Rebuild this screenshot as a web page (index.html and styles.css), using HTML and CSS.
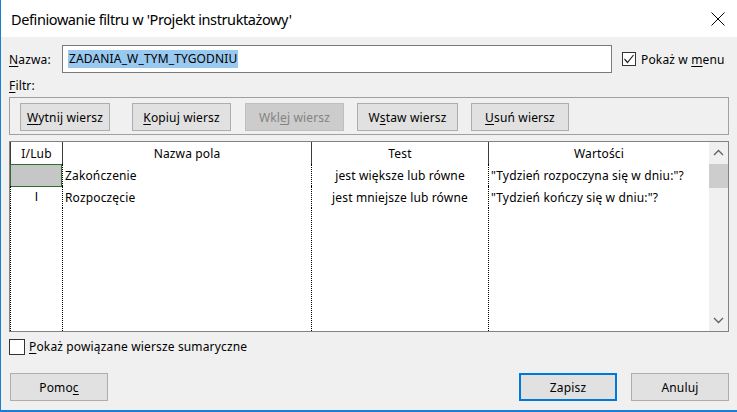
FILE: index.html
```html
<!DOCTYPE html>
<html lang="pl">
<head>
<meta charset="utf-8">
<title>Definiowanie filtru</title>
<link rel="stylesheet" href="styles.css">
</head>
<body>
<div class="window">
  <div class="titlebar">
    <span class="title">Definiowanie filtru w 'Projekt instruktażowy'</span>
    <svg class="close" width="14" height="14" viewBox="0 0 14 14"><path d="M0.5 0.5 L13.5 13.5 M13.5 0.5 L0.5 13.5" stroke="#000" stroke-width="1" fill="none"/></svg>
  </div>
  <div class="main">
    <div class="name-row">
      <span class="lbl"><u>N</u>azwa:</span>
      <div class="input"><span class="sel">ZADANIA_W_TYM_TYGODNIU</span></div>
      <label class="chk">
        <span class="box"><svg width="12" height="12" viewBox="0 0 12 12"><path d="M1.5 6 L4.5 9.5 L10.5 2" stroke="#222" stroke-width="1.2" fill="none"/></svg></span>
        <span>Pokaż w <u>m</u>enu</span>
      </label>
    </div>
    <div class="filtr-lbl"><u>F</u>iltr:</div>
    <div class="toolbar">
      <button class="btn b-cut"><u>W</u>ytnij wiersz</button>
      <button class="btn b-copy"><u>K</u>opiuj wiersz</button>
      <button class="btn b-paste disabled">Wkl<u>e</u>j wiersz</button>
      <button class="btn b-ins">W<u>s</u>taw wiersz</button>
      <button class="btn b-del"><u>U</u>suń wiersz</button>
    </div>
    <div class="grid">
      <div class="table">
        <div class="hc c1">I/Lub</div>
        <div class="hc c2">Nazwa pola</div>
        <div class="hc c3">Test</div>
        <div class="hc c4">Wartości</div>

        <div class="cell c1"><span class="selcell"></span></div>
        <div class="cell c2 left">Zakończenie</div>
        <div class="cell c3">jest większe lub równe</div>
        <div class="cell c4 left">"Tydzień rozpoczyna się w dniu:"?</div>

        <div class="cell c1 op">I</div>
        <div class="cell c2 left">Rozpoczęcie</div>
        <div class="cell c3">jest mniejsze lub równe</div>
        <div class="cell c4 left">"Tydzień kończy się w dniu:"?</div>

        <div class="fill c1"></div>
        <div class="fill c2"></div>
        <div class="fill c3"></div>
        <div class="fill c4"></div>
      </div>
      <div class="scrollbar">
        <svg class="arrow" width="19" height="22" viewBox="0 0 19 22"><path d="M5 13 L9.5 8.5 L14 13" stroke="#606060" stroke-width="1.3" fill="none"/></svg>
        <div class="thumb"></div>
        <div class="track"></div>
        <svg class="arrow" width="19" height="22" viewBox="0 0 19 22"><path d="M5 9 L9.5 13.5 L14 9" stroke="#606060" stroke-width="1.3" fill="none"/></svg>
      </div>
    </div>
    <label class="chk chk-sum">
      <span class="box box-lg"></span>
      <span><u>P</u>okaż powiązane wiersze sumaryczne</span>
    </label>
    <div class="bottom">
      <button class="btn b-help">Pomo<u>c</u></button>
      <div class="spacer"></div>
      <button class="btn b-save default">Zapisz</button>
      <button class="btn b-cancel">Anuluj</button>
    </div>
  </div>
</div>
</body>
</html>
```

FILE: styles.css
```css
html, body {
  margin: 0;
  padding: 0;
}
body {
  width: 737px;
  height: 412px;
  overflow: hidden;
  background: #f0f0f0;
  font-family: "Noto Sans", "Open Sans", sans-serif;
  font-size: 12px;
  letter-spacing: 0.15px;
  color: #000;
}
u { text-decoration: underline; text-underline-offset: 2px; }

.window {
  height: 412px;
  box-sizing: border-box;
  border-left: 1px solid #1b7ed6;
  border-bottom: 2px solid #1b7ed6;
  display: flex;
  flex-direction: column;
}
.titlebar {
  height: 37px;
  flex: none;
  background: #fff;
  display: flex;
  align-items: center;
  justify-content: space-between;
  padding-left: 10px;
}
.title {
  font-size: 14.5px;
  letter-spacing: -0.4px;
  color: #000;
}
.close {
  margin-right: 12px;
  margin-top: 1px;
}

.main {
  flex: 1;
  background: #f0f0f0;
  padding: 0 8px;
  display: flex;
  flex-direction: column;
}

.name-row {
  margin-top: 8px;
  height: 28px;
  display: flex;
  align-items: center;
}
.lbl {
  width: 53px;
  flex: none;
}
.input {
  width: 550px;
  height: 28px;
  box-sizing: border-box;
  border: 1px solid #7a7a7a;
  background: #fff;
  display: flex;
  align-items: center;
  padding-left: 5px;
}
.sel {
  background: #99c9ef;
  line-height: 18px;
  padding: 0 1px;
  color: #000;
}
.chk {
  display: flex;
  align-items: center;
  margin-left: 10px;
}
.box {
  width: 14px;
  height: 14px;
  box-sizing: border-box;
  border: 1px solid #333;
  background: #fff;
  display: flex;
  align-items: center;
  justify-content: center;
  margin-right: 5px;
}
.box-lg {
  width: 16px;
  height: 16px;
  margin-right: 4px;
}

.filtr-lbl {
  margin-top: 5px;
  line-height: 16px;
}

.toolbar {
  margin-top: 3px;
  height: 38px;
  box-sizing: border-box;
  border: 1px solid #a0a0a0;
  display: flex;
  align-items: flex-start;
  padding: 5px 0 0 10px;
}
.btn {
  font-family: inherit;
  font-size: 12px;
  letter-spacing: 0.15px;
  color: #000;
  height: 28px;
  box-sizing: border-box;
  border: 1px solid #adadad;
  background: #e1e1e1;
  padding: 0;
  margin: 0;
  flex: none;
}
.b-cut { width: 90px; }
.b-copy { width: 99px; margin-left: 22px; }
.b-paste { width: 99px; margin-left: 14px; }
.b-ins { width: 101px; margin-left: 13px; }
.b-del { width: 98px; margin-left: 13px; }
.disabled {
  background: #cccccc;
  border-color: #bfbfbf;
  color: #838383;
}

.grid {
  margin-top: 6px;
  height: 191px;
  box-sizing: border-box;
  border: 1px solid #828282;
  background: #fff;
  display: flex;
}
.table {
  width: 699px;
  display: grid;
  grid-template-columns: 53px 249px 177px 220px;
  grid-template-rows: 22px 22px 22px 1fr;
}
.hc {
  display: flex;
  align-items: center;
  justify-content: center;
  border-right: 1px solid #3c3c3c;
}
.hc.c1 { border-left: 1px solid #3c3c3c; }
.hc.c4 { border-right: none; }
.cell, .fill {
  border-right: 1px dotted #000;
}
.cell {
  display: flex;
  align-items: center;
  justify-content: center;
  white-space: nowrap;
  position: relative;
}
.cell.op {
  font-family: "Liberation Sans", "Noto Sans", sans-serif;
}
.cell.c1, .fill.c1 { border-left: 1px dotted #000; }
.cell.c4, .fill.c4 { border-right: none; }
.cell.left {
  justify-content: flex-start;
  padding-left: 2px;
}
.selcell {
  position: absolute;
  inset: 0 0 -1px -1px;
  background: #c6c6c6;
  border: 1px solid #2f6d33;
}

.scrollbar {
  width: 19px;
  background: #f0f0f0;
  display: flex;
  flex-direction: column;
}
.arrow { display: block; flex: none; }
.thumb {
  height: 24px;
  background: #cdcdcd;
  flex: none;
}
.track { flex: 1; }

.chk-sum {
  margin-left: 0;
  margin-top: 6px;
  height: 17px;
}

.bottom {
  margin-top: 18px;
  display: flex;
}
.b-help { width: 98px; margin-left: 1px; }
.spacer { flex: 1; }
.b-save { width: 98px; }
.b-cancel { width: 98px; margin-left: 14px; }
.default {
  border: 2px solid #0078d7;
}
```
